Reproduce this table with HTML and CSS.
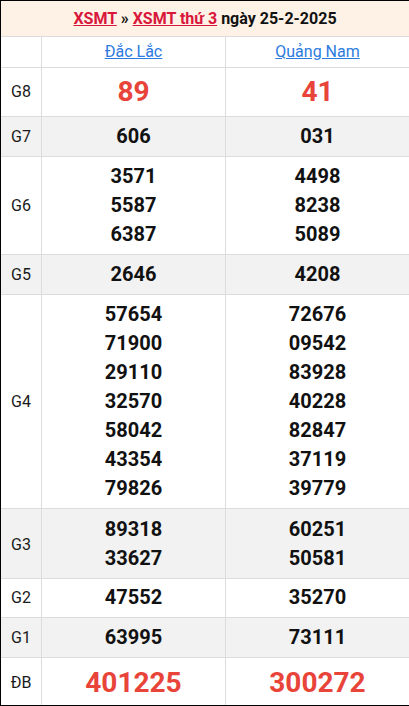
FILE: index.html
```html
<!DOCTYPE html>
<html lang="vi">
<head>
<meta charset="utf-8">
<title>XSMT thứ 3 ngày 25-2-2025</title>
<link rel="stylesheet" href="styles.css">
</head>
<body>
<table class="kq">
  <colgroup>
    <col class="c-lbl">
    <col class="c-num">
    <col class="c-num">
  </colgroup>
  <tr class="title-row">
    <th colspan="3"><a href="#" class="red">XSMT</a> » <a href="#" class="red">XSMT thứ 3</a> ngày 25-2-2025</th>
  </tr>
  <tr class="prov-row">
    <td class="lbl"></td>
    <td><a href="#" class="blue">Đắc Lắc</a></td>
    <td><a href="#" class="blue">Quảng Nam</a></td>
  </tr>
  <tr class="big">
    <td class="lbl">G8</td>
    <td><div>89</div></td>
    <td><div>41</div></td>
  </tr>
  <tr class="alt">
    <td class="lbl">G7</td>
    <td><div>606</div></td>
    <td><div>031</div></td>
  </tr>
  <tr>
    <td class="lbl">G6</td>
    <td><div>3571</div><div>5587</div><div>6387</div></td>
    <td><div>4498</div><div>8238</div><div>5089</div></td>
  </tr>
  <tr class="alt">
    <td class="lbl">G5</td>
    <td><div>2646</div></td>
    <td><div>4208</div></td>
  </tr>
  <tr>
    <td class="lbl">G4</td>
    <td><div>57654</div><div>71900</div><div>29110</div><div>32570</div><div>58042</div><div>43354</div><div>79826</div></td>
    <td><div>72676</div><div>09542</div><div>83928</div><div>40228</div><div>82847</div><div>37119</div><div>39779</div></td>
  </tr>
  <tr class="alt g3">
    <td class="lbl">G3</td>
    <td><div>89318</div><div>33627</div></td>
    <td><div>60251</div><div>50581</div></td>
  </tr>
  <tr class="g2">
    <td class="lbl">G2</td>
    <td><div>47552</div></td>
    <td><div>35270</div></td>
  </tr>
  <tr class="alt">
    <td class="lbl">G1</td>
    <td><div>63995</div></td>
    <td><div>73111</div></td>
  </tr>
  <tr class="big db">
    <td class="lbl">ĐB</td>
    <td><div>401225</div></td>
    <td><div>300272</div></td>
  </tr>
</table>
</body>
</html>
```
FILE: styles.css
```css
html, body {
  margin: 0;
  padding: 0;
  background: #fff;
}
body {
  font-family: Roboto, "Liberation Sans", Arial, sans-serif;
  color: #111;
}
.kq {
  width: 409px;
  border: 1px solid #000;
  border-collapse: separate;
  border-spacing: 0;
  table-layout: fixed;
}
.c-lbl {
  width: 40px;
}
.c-num {
  width: 184px;
}
.kq td, .kq th {
  border-top: 1px solid #dcdcdc;
  border-left: 1px solid #dcdcdc;
  padding: 5px 0;
  text-align: center;
  vertical-align: middle;
}
.kq td.lbl {
  border-left: none;
  font-size: 16px;
  font-weight: 400;
  color: #1a1a1a;
}
.kq td {
  font-size: 20px;
  font-weight: 700;
  line-height: 29px;
  color: #111;
}
.title-row th {
  border-top: none;
  border-left: none;
  background: #fef1e6;
  height: 25px;
  font-size: 16px;
  font-weight: 700;
  line-height: 25px;
  color: #111;
}
.red {
  color: #d8173b;
  text-decoration: underline;
}
.blue {
  color: #2b7be0;
  font-weight: 400;
  text-decoration: underline;
}
.prov-row td {
  font-size: 16px;
  line-height: 20px;
}
.alt td {
  background: #f2f2f2;
}
.big td {
  font-size: 28px;
  line-height: 38px;
  color: #e8443a;
}
.big td.lbl {
  font-size: 16px;
}
.db td {
  padding: 6px 0 3px;
}
.g3 td {
  padding: 6px 0 5px;
}
.g2 td {
  padding: 4px 0 5px;
}
```
